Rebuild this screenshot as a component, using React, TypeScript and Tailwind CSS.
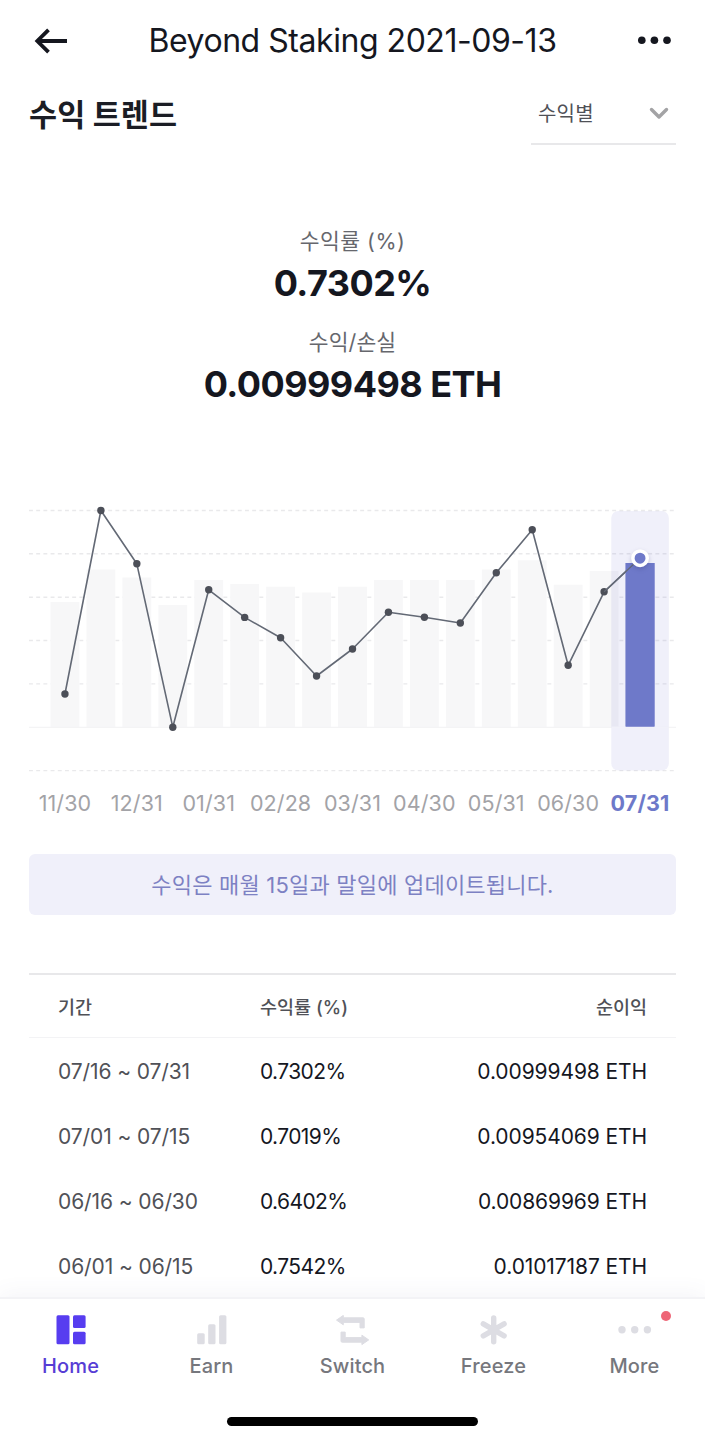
import type { ReactNode } from "react";
import { clsx } from "clsx";

const CHART_WIDTH = 647;
const BASELINE = 227;
const STEP = CHART_WIDTH / 18;
const BAR_WIDTH = 28.8;

// bar = top of the column, point = position on the yield line
const periods = [
  { bar: 102, point: 194 },
  { bar: 69.5, point: 10.5 },
  { bar: 77.5, point: 63.8 },
  { bar: 105, point: 227.2 },
  { bar: 80, point: 89.8 },
  { bar: 84, point: 117.4 },
  { bar: 86.7, point: 137.8 },
  { bar: 92.5, point: 176 },
  { bar: 86.7, point: 149 },
  { bar: 80, point: 112.3 },
  { bar: 80, point: 117.2 },
  { bar: 80, point: 123 },
  { bar: 69.5, point: 72.8 },
  { bar: 60.3, point: 29.8 },
  { bar: 84.7, point: 165.3 },
  { bar: 71, point: 91.8 },
  { bar: 63, point: 58.2 },
];

const labels = ["11/30", "12/31", "01/31", "02/28", "03/31", "04/30", "05/31", "06/30", "07/31"];

const rows = [
  { period: "07/16 ~ 07/31", rate: "0.7302%", profit: "0.00999498 ETH" },
  { period: "07/01 ~ 07/15", rate: "0.7019%", profit: "0.00954069 ETH" },
  { period: "06/16 ~ 06/30", rate: "0.6402%", profit: "0.00869969 ETH" },
  { period: "06/01 ~ 06/15", rate: "0.7542%", profit: "0.01017187 ETH" },
];

function TrendChart() {
  const x = (i: number) => STEP * (i + 1);
  const last = periods.length - 1;
  const line = periods.map((p, i) => `${x(i)},${p.point}`).join(" ");

  return (
    <svg className="block h-[280px] w-full overflow-visible" viewBox="0 0 647 280">
      {[10.5, 53.8, 97.2, 140.5, 183.9, 270.6].map((y) => (
        <line key={y} x1="0" x2={CHART_WIDTH} y1={y} y2={y} stroke="#e9e9eb" strokeWidth="1.4" strokeDasharray="3.9 3.3" />
      ))}
      {periods.map((p, i) => (
        <rect
          key={i}
          x={x(i) - BAR_WIDTH / 2}
          y={p.bar}
          width={BAR_WIDTH}
          height={BASELINE - p.bar}
          fill={i === last ? "#6e79c9" : "#f7f7f8"}
        />
      ))}
      <line x1="0" x2={CHART_WIDTH} y1={BASELINE + 0.3} y2={BASELINE + 0.3} stroke="#f4f4f5" strokeWidth="1.2" />
      <polyline points={line} fill="none" stroke="#636975" strokeWidth="1.6" strokeLinejoin="round" />
      {periods.slice(0, last).map((p, i) => (
        <circle key={i} cx={x(i)} cy={p.point} r="3.7" fill="#4c4f58" />
      ))}

      {/* Selected period */}
      <rect x={x(last) - BAR_WIDTH} y="11" width={BAR_WIDTH * 2} height="259.5" rx="7" fill="#6e6ed2" fillOpacity="0.1" />
      <line x1={x(last) - BAR_WIDTH} x2={x(last) + BAR_WIDTH} y1={BASELINE + 0.2} y2={BASELINE + 0.2} stroke="#f6f6fc" strokeWidth="1" />
      <rect x={x(last) - BAR_WIDTH / 2} y={periods[last].bar} width={BAR_WIDTH} height={BASELINE - periods[last].bar - 0.5} fill="#6e79c9" />
      <line x1={x(last - 1)} y1={periods[last - 1].point} x2={x(last)} y2={periods[last].point} stroke="#636975" strokeWidth="1.2" />
      <circle cx={x(last)} cy={periods[last].point} r="7.2" fill="#6e79c9" stroke="#fff" strokeWidth="3.5" className="drop-shadow-[0_2px_2px_rgba(50,50,110,0.25)]" />
    </svg>
  );
}

interface StatProps {
  label: string;
  value: string;
  labelClass: string;
}

function Stat({ label, value, labelClass }: StatProps) {
  return (
    <div className="flex flex-col items-center">
      <p className={clsx("h-[34px] text-[21.5px] leading-[34px] text-[#66676d]", labelClass)}>{label}</p>
      <p className="h-[51px] text-[36px] leading-[51px] font-bold tracking-[-0.55px] text-[#15171f]">{value}</p>
    </div>
  );
}

function NavItem({ label, active, children }: { label: string; active?: boolean; children: ReactNode }) {
  return (
    <button className="relative flex flex-col items-center pt-4">
      <svg className={clsx("h-8 w-9", active ? "text-[#573df0]" : "text-[#dddde3]")} viewBox="0 0 36 32" fill="currentColor">
        {children}
      </svg>
      <span
        className={clsx(
          "mt-[5px] text-[20px] leading-[28px] font-medium tracking-[0.15px]",
          active ? "text-[#573dd5]" : "text-[#76777d]"
        )}
      >
        {label}
      </span>
    </button>
  );
}

export default function App() {
  return (
    <div className="flex h-[1440px] w-[705px] flex-col overflow-hidden bg-white font-['Inter','Noto_Sans_CJK_KR',sans-serif]">
      <header className="flex h-[81px] shrink-0 items-center justify-between px-[33px]">
        <svg className="h-8 w-9" viewBox="0 0 36 32" fill="none" stroke="#15171f" strokeWidth="3.8">
          <path d="M34 16H4M15.5 4.8 4.3 16l11.2 11.2" />
        </svg>
        <h1 className="text-[32px] leading-[40px] tracking-[-0.46px] whitespace-nowrap text-[#15171f]">Beyond Staking 2021-09-13</h1>
        <svg className="h-8 w-9" viewBox="0 0 36 32" fill="#15171f">
          <circle cx="5.8" cy="15.2" r="3.8" />
          <circle cx="18.4" cy="15.2" r="3.8" />
          <circle cx="31" cy="15.2" r="3.8" />
        </svg>
      </header>

      <main className="flex h-[1216px] shrink-0 flex-col px-[29px]">
        <div className="flex h-16 shrink-0 items-center justify-between">
          <h2 className="pt-1 text-[30.5px] leading-[40px] font-bold tracking-[0.1px] whitespace-nowrap text-[#1b1d25]">수익 트렌드</h2>
          <button className="flex h-16 w-[145px] items-center justify-between border-b-2 border-[#e8e8ea] pt-1 pr-[7px] pl-[7px]">
            <span className="text-[20px] leading-[30px] tracking-[0.2px] text-[#505157]">수익별</span>
            <svg className="h-5 w-5" viewBox="0 0 20 20" fill="none" stroke="#a3a3a5" strokeWidth="3.4" strokeLinecap="round" strokeLinejoin="round">
              <path d="m2.5 5.5 7.5 7.5L17.5 5.5" />
            </svg>
          </button>
        </div>

        <div className="mt-[79px] flex shrink-0 flex-col gap-4">
          <Stat label="수익률 (%)" value="0.7302%" labelClass="tracking-[0.5px]" />
          <Stat label="수익/손실" value="0.00999498 ETH" labelClass="tracking-[0.1px]" />
        </div>

        <div className="mt-[90px] shrink-0">
          <TrendChart />
          <div className="mt-[7px] grid grid-cols-9">
            {labels.map((label, i) => (
              <span
                key={label}
                className={clsx(
                  "text-center text-[21.5px] leading-[32px] whitespace-nowrap",
                  i === labels.length - 1 ? "font-bold tracking-[0.2px] text-[#6e79c9]" : "tracking-[0.1px] text-[#a3a3a7]"
                )}
              >
                {label}
              </span>
            ))}
          </div>
        </div>

        <div className="mt-[35px] flex h-[61px] shrink-0 items-center justify-center rounded-md bg-[#f0f0fa]">
          <p className="text-[22px] leading-[32px] tracking-[0.2px] text-[#7d81c3]">수익은 매월 15일과 말일에 업데이트됩니다.</p>
        </div>

        <div className="mt-[58px] shrink-0 border-t-2 border-[#e8e8ea]">
          <div className="grid h-[63px] grid-cols-[202px_1fr_1fr] items-center border-b border-[#f3f3f5] px-[29px] pt-[3px] text-[18.5px] font-medium text-[#505157]">
            <span>기간</span>
            <span>수익률 (%)</span>
            <span className="text-right">순이익</span>
          </div>
          {rows.map((row) => (
            <div key={row.period} className="grid h-[65px] grid-cols-[202px_1fr_1fr] items-center px-[29px] pt-[3px] text-[21px] text-[#15171f]">
              <span className="tracking-[-0.1px] text-[#505157]">{row.period}</span>
              <span className="tracking-[-0.6px]">{row.rate}</span>
              <span className="text-right tracking-[-0.1px] whitespace-nowrap">{row.profit}</span>
            </div>
          ))}
        </div>
      </main>

      <nav className="relative h-[143px] shrink-0 border-t-2 border-[#f3f3f6] bg-white shadow-[0_-2px_22px_rgba(80,80,140,0.07)]">
        <div className="grid grid-cols-5">
          <NavItem label="Home" active>
            <rect x="3.5" y="0.3" width="13" height="29" rx="1.5" />
            <rect x="20" y="0.3" width="12.6" height="12.6" rx="1.5" />
            <rect x="20" y="16.7" width="12.6" height="12.6" rx="1.5" />
          </NavItem>
          <NavItem label="Earn">
            <rect x="3.2" y="18.3" width="7.5" height="11" rx="1.5" />
            <rect x="14.2" y="9.3" width="7.3" height="20" rx="1.5" />
            <rect x="25.1" y="0.3" width="7.3" height="29" rx="1.5" />
          </NavItem>
          <NavItem label="Switch">
            <g stroke="currentColor" strokeWidth="1" strokeLinejoin="round">
              <path d="M1.5 5.1 8.3 0.4v2.4H28a1.200 1.200 0 0 1 1.200 1.200v8.900h-4.200V7.400H8.300v2.400Z" />
              <path d="M33.7 24.900 26.900 29.600v-2.400H7.200a1.200 1.200 0 0 1-1.200-1.200v-8.900h4.200v5.500h16.700v-2.400Z" />
            </g>
          </NavItem>
          <NavItem label="Freeze">
            <path d="M17.7 3v23.700M7.300 8.900l20.800 12M28.100 8.900l-20.800 12" stroke="currentColor" strokeWidth="5.400" strokeLinecap="round" />
          </NavItem>
          <NavItem label="More">
            <circle cx="5" cy="14.800" r="3.700" />
            <circle cx="17.700" cy="14.800" r="3.700" />
            <circle cx="30.400" cy="14.800" r="3.700" />
          </NavItem>
        </div>
        <span className="absolute top-[12px] right-[34px] h-[10px] w-[10px] rounded-full bg-[#ee6677]" />
        <div className="mx-auto mt-[37px] h-[9px] w-[251px] rounded-full bg-black" />
      </nav>
    </div>
  );
}
